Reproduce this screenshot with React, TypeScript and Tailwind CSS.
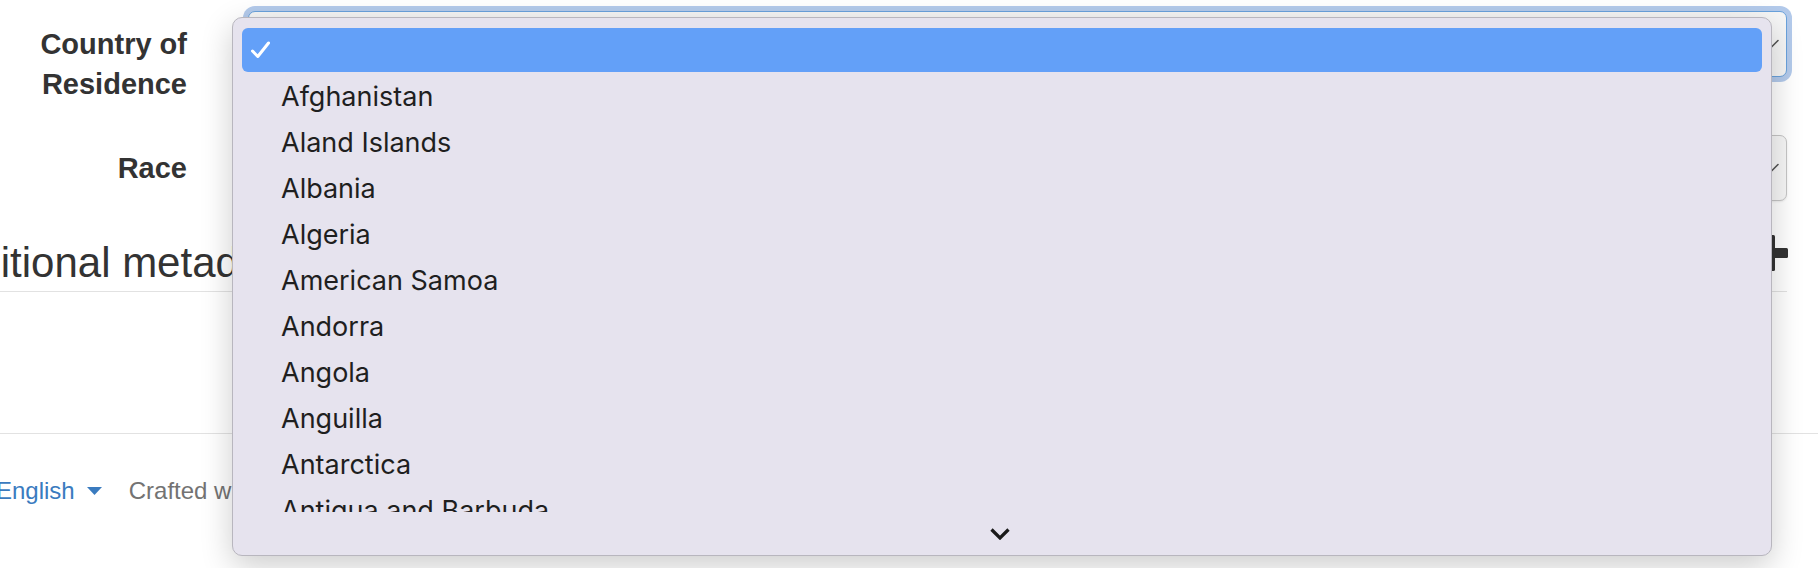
import React from "react";

const countries = [
  "",
  "Afghanistan",
  "Aland Islands",
  "Albania",
  "Algeria",
  "American Samoa",
  "Andorra",
  "Angola",
  "Anguilla",
  "Antarctica",
  "Antigua and Barbuda",
  "Argentina",
];

function SelectChevron() {
  return (
    <svg width="16" height="10" viewBox="0 0 16 10" className="absolute right-[7px] top-1/2 -translate-y-1/2">
      <path d="M1 1.5 L8 8.5 L15 1.5" fill="none" stroke="#555" strokeWidth="1.6" strokeLinecap="round" strokeLinejoin="round" />
    </svg>
  );
}

export default function App() {
  return (
    <div className="relative w-[1818px] h-[568px] overflow-hidden bg-white font-['Liberation_Sans',Arial,sans-serif] text-[#333]">
      <div className="pr-[31px] pt-[11px]">
        {/* Row 1 */}
        <div className="flex gap-[61px]">
          <label className="w-[187px] shrink-0 pt-[13px] text-right text-[29px] leading-[40px] font-bold">
            Country of
            <br />
            Residence
          </label>
          <div className="relative flex-1 h-[66px] rounded-[7px] border-[1.5px] border-[#6aa2dc] bg-[#f6f6f6] shadow-[0_0_0_5px_#b3caeb]">
            <SelectChevron />
          </div>
        </div>
        {/* Row 2 */}
        <div className="mt-[31px] flex gap-[61px]">
          <label className="w-[187px] shrink-0 pt-[13px] text-right text-[29px] leading-[40px] font-bold">Race</label>
          <div className="relative flex-1 h-[66px] rounded-[7px] border border-[#c6c6c6] bg-[#f7f7f7] shadow-[0_1px_2px_rgba(0,0,0,0.08)]">
            <SelectChevron />
          </div>
        </div>
        {/* Heading */}
        <div className="ml-[-74px] mt-[34px] flex items-start justify-between border-b border-[#e2e2e2] pb-[5px]">
          <h2 className="mt-[5px] text-[42px] leading-[46px] font-normal">Additional metadata</h2>
          <svg width="36" height="36" viewBox="0 0 36 36" className="mr-[-1px]">
            <rect x="13" y="0" width="10" height="36" rx="1.5" fill="#333" />
            <rect x="0" y="13" width="36" height="10" rx="1.5" fill="#333" />
          </svg>
        </div>
      </div>
      {/* Footer */}
      <footer className="mt-[141px] border-t border-[#e2e2e2] pt-[40px]">
        <div className="ml-[-4px] flex items-center text-[24px] leading-[34px]">
          <span className="text-[#3a7bbf]">English</span>
          <svg width="15" height="8" viewBox="0 0 15 8" className="ml-[12px]">
            <path d="M0 0 L15 0 L7.5 8 Z" fill="#3a7bbf" />
          </svg>
          <span className="ml-[27px] text-[#737373]">Crafted with care by the team</span>
        </div>
      </footer>

      {/* Native-style dropdown menu */}
      <div className="absolute left-[232px] top-[17px] flex h-[539px] w-[1540px] flex-col rounded-[10px] border border-[#b8b6be] bg-[#e6e3ee] font-['Inter','Noto_Sans',sans-serif] shadow-[0_10px_32px_rgba(0,0,0,0.2)]">
        <div className="h-[494px] overflow-hidden px-[9px] pt-[9px]">
          {countries.map((c, i) => (
            <div key={i} className="h-[46px] py-px">
              <div
                className={
                  i === 0
                    ? "flex h-full items-center rounded-[6px] bg-[#63a0f8] pl-[9px]"
                    : "flex h-full items-center rounded-[6px] pl-[9px]"
                }
              >
                <div className="w-[30px] shrink-0">
                  {i === 0 && (
                    <svg width="19" height="18" viewBox="0 0 19 18">
                      <path d="M1.5 10 L6.8 15.5 L17.5 2" fill="none" stroke="#fff" strokeWidth="3" strokeLinecap="round" strokeLinejoin="round" />
                    </svg>
                  )}
                </div>
                <span className="text-[27px] leading-none text-[#1f1f1f]">{c}</span>
              </div>
            </div>
          ))}
        </div>
        <div className="flex flex-1 items-center justify-center pr-[4px]">
          <svg width="20" height="12" viewBox="0 0 20 12">
            <path d="M1.5 1.5 L10 10 L18.5 1.5" fill="none" stroke="#1a1a1a" strokeWidth="3.2" strokeLinejoin="miter" />
          </svg>
        </div>
      </div>
    </div>
  );
}
